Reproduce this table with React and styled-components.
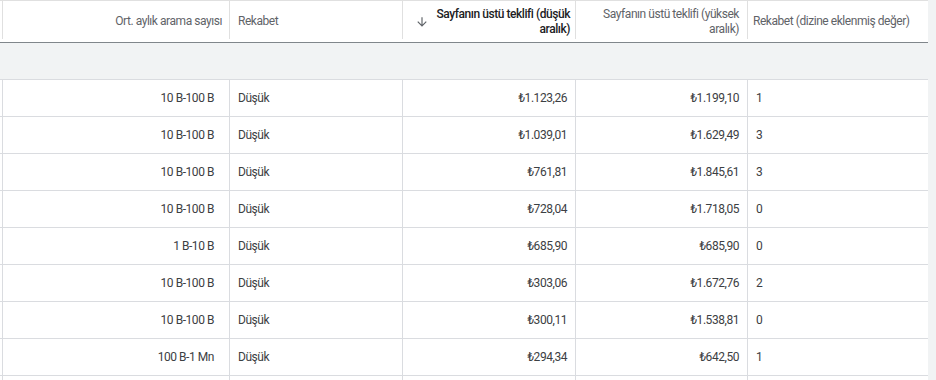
import React from "react";
import styled, { createGlobalStyle } from "styled-components";

const GlobalStyle = createGlobalStyle`
    body {
        margin: 0;
        background: #ffffff;
        font-family: Roboto, "Noto Sans", sans-serif;
    }
`;

const COLUMNS = "3px 227px 173px 173px 172px 180px";

const Page = styled.div`
    display: flex;
    width: 936px;
    height: 380px;
    overflow: hidden;
`;

const Table = styled.div`
    width: 928px;
    flex: none;
    background: #ffffff;
`;

const Gutter = styled.div`
    flex: 1;
    background: #f1f3f4;
`;

const HeaderRow = styled.div`
    display: grid;
    grid-template-columns: ${COLUMNS};
    height: 43px;
    box-sizing: border-box;
    border-top: 1px solid #e0e0e0;
    border-bottom: 1px solid #80868b;
`;

const HeaderCell = styled.div`
    display: flex;
    align-items: center;
    justify-content: ${(p) => (p.$right ? "flex-end" : "flex-start")};
    gap: ${(p) => p.$gap ?? 7}px;
    box-sizing: border-box;
    padding: 0 ${(p) => p.$pr ?? 8}px 0 ${(p) => p.$pl ?? 8}px;
    margin-bottom: 3px;
    border-right: ${(p) => (p.$last ? "none" : "1px solid #e0e0e0")};
    font-size: 12px;
    letter-spacing: -0.45px;
    line-height: 14.5px;
    color: ${(p) => (p.$sorted ? "#202124" : "#5f6368")};
    font-weight: ${(p) => (p.$sorted ? 500 : 400)};
    text-align: ${(p) => (p.$right ? "right" : "left")};
`;

const HeaderText = styled.span`
    position: relative;
    top: 1.5px;
`;

const SortIcon = styled.svg`
    width: 14px;
    height: 14px;
    flex: none;
    fill: #5f6368;
    position: relative;
    top: 1.5px;
`;

const SummaryBand = styled.div`
    height: 37px;
    box-sizing: border-box;
    background: #f1f3f4;
    border-bottom: 1px solid #dadce0;
`;

const Row = styled.div`
    display: grid;
    grid-template-columns: ${COLUMNS};
    height: 37px;
    box-sizing: border-box;
    border-bottom: 1px solid #dadce0;
`;

const Cell = styled.div`
    display: flex;
    align-items: center;
    justify-content: ${(p) => (p.$right ? "flex-end" : "flex-start")};
    box-sizing: border-box;
    padding: 0 ${(p) => p.$pr ?? 8}px 0 ${(p) => p.$pl ?? 8}px;
    border-right: ${(p) => (p.$last ? "none" : "1px solid #dadce0")};
    font-size: 12px;
    letter-spacing: -0.45px;
    color: #3c4043;
    white-space: nowrap;
`;

const rows = [
    ["10 B-100 B", "Düşük", "₺1.123,26", "₺1.199,10", "1"],
    ["10 B-100 B", "Düşük", "₺1.039,01", "₺1.629,49", "3"],
    ["10 B-100 B", "Düşük", "₺761,81", "₺1.845,61", "3"],
    ["10 B-100 B", "Düşük", "₺728,04", "₺1.718,05", "0"],
    ["1 B-10 B", "Düşük", "₺685,90", "₺685,90", "0"],
    ["10 B-100 B", "Düşük", "₺303,06", "₺1.672,76", "2"],
    ["10 B-100 B", "Düşük", "₺300,11", "₺1.538,81", "0"],
    ["100 B-1 Mn", "Düşük", "₺294,34", "₺642,50", "1"],
    ["", "", "", "", ""],
];

function App() {
    return (
        <>
            <GlobalStyle />
            <Page>
                <Table>
                    <HeaderRow>
                        <HeaderCell $pl={0} $pr={0} />
                        <HeaderCell $right $pr={7}><HeaderText>Ort. aylık arama sayısı</HeaderText></HeaderCell>
                        <HeaderCell><HeaderText>Rekabet</HeaderText></HeaderCell>
                        <HeaderCell $right $sorted $pl={12} $pr={5} $gap={5}>
                            <SortIcon viewBox="0 0 24 24">
                                <path d="M20 12l-1.41-1.41L13 16.17V4h-2v12.17l-5.58-5.59L4 12l8 8 8-8z" />
                            </SortIcon>
                            <HeaderText>Sayfanın üstü teklifi (düşük aralık)</HeaderText>
                        </HeaderCell>
                        <HeaderCell $right $pl={8} $pr={8}><HeaderText>Sayfanın üstü teklifi (yüksek aralık)</HeaderText></HeaderCell>
                        <HeaderCell $last $pl={5}><HeaderText>Rekabet (dizine eklenmiş değer)</HeaderText></HeaderCell>
                    </HeaderRow>
                    <SummaryBand />
                    {rows.map((r, i) => (
                        <Row key={i}>
                            <Cell $pl={0} $pr={0} />
                            <Cell $right $pr={15}>{r[0]}</Cell>
                            <Cell>{r[1]}</Cell>
                            <Cell $right>{r[2]}</Cell>
                            <Cell $right>{r[3]}</Cell>
                            <Cell $last>{r[4]}</Cell>
                        </Row>
                    ))}
                </Table>
                <Gutter />
            </Page>
        </>
    );
}

export default App;
